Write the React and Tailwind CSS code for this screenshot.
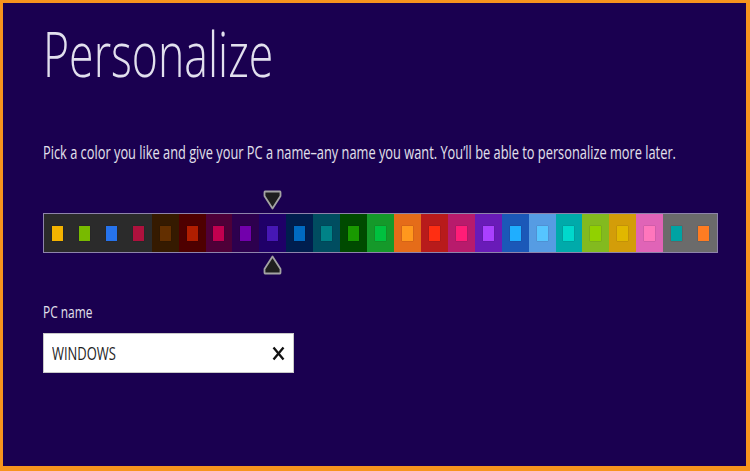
import React from 'react';

const colors = [
    ['#2b2b2b', '#f4b300'],
    ['#2b2b2b', '#78ba00'],
    ['#2b2b2b', '#2673ec'],
    ['#2b2b2b', '#ae113d'],
    ['#351a00', '#632f00'],
    ['#4e0000', '#b01e00'],
    ['#4e0038', '#c1004f'],
    ['#2d004e', '#7200ac'],
    ['#1f0068', '#4617b4'],
    ['#001e4e', '#006ac1'],
    ['#004d60', '#008287'],
    ['#004a00', '#199900'],
    ['#15992a', '#00c13f'],
    ['#e56c19', '#ff981d'],
    ['#b81b1b', '#ff2e12'],
    ['#b81b6c', '#ff1d77'],
    ['#691bb8', '#aa40ff'],
    ['#1b58b8', '#1faeff'],
    ['#569ce3', '#56c5ff'],
    ['#00aaaa', '#00d8cc'],
    ['#83ba1f', '#91d100'],
    ['#d39d09', '#e1b700'],
    ['#e064b7', '#ff76bc'],
    ['#6b6b6b', '#00a3a3'],
    ['#6b6b6b', '#fe7c22'],
];

const Marker = ({ up }) => (
    <svg width="19" height="20" viewBox="0 0 19 20" className={up ? 'rotate-180' : ''}>
        <path d="M2 1.5 H17 Q17.5 1.5 17.5 2.5 V6 L9.5 18.5 L1.5 6 V2.5 Q1.5 1.5 2 1.5 Z" fill="#1e1e1e" stroke="#a3a3a3" strokeWidth="1.8" strokeLinejoin="round" />
    </svg>
);

const App = () => {
    return (
        <div className="w-[750px] h-[471px] bg-[#1a0050] border-[#f7941d] border-t-[3px] border-l-[3px] border-r-[4px] border-b-[5px] font-['Open_Sans',sans-serif] text-[#e6e4f0] overflow-hidden">
            <div className="pl-10 pt-[19px] flex flex-col items-start">
                {/* heading */}
                <h1 className="text-[62px] leading-none font-light whitespace-nowrap origin-left scale-x-[0.72] text-[#e2e0ee]">
                    Personalize
                </h1>

                <p className="mt-[56px] text-[18px] leading-[24px] whitespace-nowrap origin-left scale-x-[0.712] text-[#e2e0ec]">
                    Pick a color you like and give your PC a name–any name you want. You’ll be able to personalize more later.
                </p>

                {/* colour picker */}
                <div className="mt-[26px] flex flex-col">
                    <div className="ml-[220px] h-5">
                        <Marker />
                    </div>
                    <div className="mt-[3px] w-[675px] h-10 flex border border-[#8e84ab]">
                        {colors.map(([bg, fg], i) => (
                            <div key={i} className="flex-1 flex items-center justify-center" style={{ backgroundColor: bg }}>
                                <div className="w-[11px] h-[15px] shadow-[0_0_1px_rgba(0,0,0,0.4)]" style={{ backgroundColor: fg }}></div>
                            </div>
                        ))}
                    </div>
                    <div className="mt-[2px] ml-[220px] h-5">
                        <Marker up />
                    </div>
                </div>

                {/* pc name */}
                <label className="mt-[26px] text-[17px] leading-[22px] whitespace-nowrap origin-left scale-x-[0.7] text-[#e2e0ec]">
                    PC name
                </label>
                <div className="mt-[10px] w-[251px] h-10 bg-white border border-[#c9c9c9] flex items-center justify-between pl-2 pr-2">
                    <span className="text-[18px] leading-[24px] text-[#1e1e1e] whitespace-nowrap origin-left scale-x-[0.72]">WINDOWS</span>
                    <svg width="13" height="15" viewBox="0 0 13 15">
                        <path d="M1.5 1.5 L11.5 13.5 M11.5 1.5 L1.5 13.5" stroke="#111111" strokeWidth="2.3" strokeLinecap="butt" />
                    </svg>
                </div>
            </div>
        </div>
    );
};

export default App;
